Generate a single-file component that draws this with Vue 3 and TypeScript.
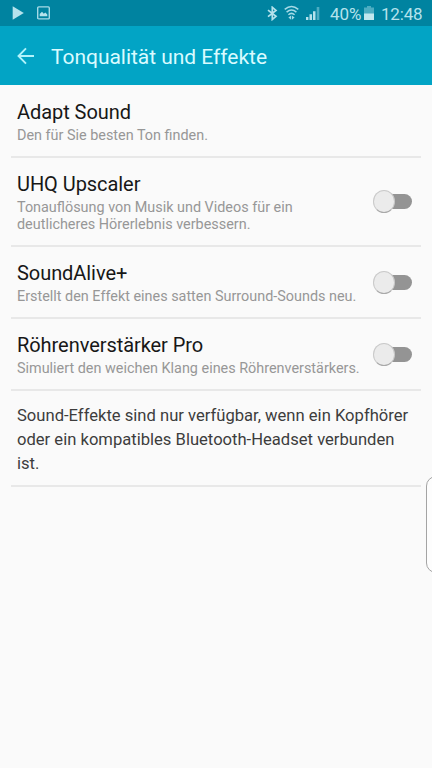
<script setup lang="ts">
interface Setting {
  title: string
  lines: string[]
  toggle: boolean
}

const settings: Setting[] = [
  { title: 'Adapt Sound', lines: ['Den für Sie besten Ton finden.'], toggle: false },
  {
    title: 'UHQ Upscaler',
    lines: ['Tonauflösung von Musik und Videos für ein', 'deutlicheres Hörerlebnis verbessern.'],
    toggle: true,
  },
  { title: 'SoundAlive+', lines: ['Erstellt den Effekt eines satten Surround-Sounds neu.'], toggle: true },
  { title: 'Röhrenverstärker Pro', lines: ['Simuliert den weichen Klang eines Röhrenverstärkers.'], toggle: true },
]

const note: string[] = [
  'Sound-Effekte sind nur verfügbar, wenn ein Kopfhörer',
  'oder ein kompatibles Bluetooth-Headset verbunden',
  'ist.',
]
</script>

<template>
  <div class="screen">
    <div class="status">
      <svg class="play" width="12" height="14" viewBox="0 0 12 14"><path d="M0.7 0.2 11.8 7 0.7 13.8z" fill="#b5e2ec" /></svg>
      <svg class="picture" width="13" height="14" viewBox="0 0 13 14">
        <rect x="0.7" y="0.9" width="11.6" height="12" rx="1" fill="none" stroke="#a5dae6" stroke-width="1.4" />
        <path d="M2.7 10.2V8L5 5.8l1.8 2 1.5-1.2 2 2v1.6z" fill="#b5e2ec" />
      </svg>
      <span class="gap"></span>
      <svg class="bluetooth" width="11" height="15" viewBox="0 0 11 15">
        <path d="M1 4.2 9 10.4 5.3 13.5V1.3L9 4.4 1 10.6" fill="none" stroke="#b5e2ec" stroke-width="1.7" />
      </svg>
      <svg class="wifi" width="15" height="16" viewBox="0 0 15 16">
        <g fill="none" stroke="#a5dae6" stroke-width="1.5">
          <path d="M.7 4.4Q7.5-1.5 14.3 4.4" />
          <path d="M2.6 7.1Q7.5 2.8 12.4 7.1" />
          <path d="M4.4 9.7Q7.5 7 10.6 9.7" />
        </g>
        <path d="M4.4 12.6 7.1 10.4v4.4zM10.6 12.6 7.9 10.4v4.4z" fill="#a5dae6" />
      </svg>
      <svg class="signal" width="14" height="14" viewBox="0 0 14 14">
        <path d="M0 11h2.4v3H0zM3.5 8.3h2.5V14H3.5zM7 5.2h2.5V14H7z" fill="#b5e2ec" />
        <path d="M10.7 1h2.6v13h-2.6z" fill="#4dadc2" />
      </svg>
      <span class="percent">40%</span>
      <svg class="battery" width="10" height="14" viewBox="0 0 10 14">
        <path d="M3 0h4v1.5H10V8H0V1.5h3z" fill="#4dadc2" />
        <path d="M0 7.5h10V14H0z" fill="#c1e7ee" />
      </svg>
      <span class="clock">12:48</span>
    </div>

    <header class="header">
      <svg class="back" width="18" height="18" viewBox="0 0 18 18">
        <path d="M17 9H1.8M9 1.3 1.5 9 9 16.7" fill="none" stroke="#b1f3fb" stroke-width="1.9" />
      </svg>
      <h1>Tonqualität und Effekte</h1>
    </header>

    <main>
      <section v-for="item in settings" :key="item.title" class="row">
        <div class="copy">
          <h2>{{ item.title }}</h2>
          <p v-for="line in item.lines" :key="line">{{ line }}</p>
        </div>
        <span v-if="item.toggle" class="switch"><i class="knob"></i></span>
      </section>
      <section class="note">
        <p v-for="line in note" :key="line">{{ line }}</p>
      </section>
    </main>

    <div class="edge"></div>
  </div>
</template>

<style>
body {
  background: #fafafa;
}
</style>

<style scoped>
.screen {
  position: relative;
  height: 768px;
  overflow: hidden;
  background: #fafafa;
  font-family: Roboto, sans-serif;
}
h1, h2, p {
  margin: 0;
  font-weight: 400;
  white-space: nowrap;
}
.status {
  display: flex;
  align-items: center;
  height: 26px;
  padding: 0 10px 0 12px;
  background: #0083a0;
  color: #b5e2ec;
  font-size: 17px;
  line-height: 26px;
}
svg {
  flex: none;
  display: block;
}
.picture { margin-left: 13px; }
.gap { flex: 1; }
.wifi { margin-left: 6px; }
.signal { margin-left: 7px; }
.percent {
  width: 31px;
  margin-left: 10px;
  padding-top: 2px;
}
.battery { margin-left: 3px; }
.clock {
  width: 41px;
  margin-left: 7px;
  padding-top: 2px;
  letter-spacing: -0.2px;
}
.header {
  display: flex;
  align-items: center;
  height: 59px;
  padding-left: 17px;
  background: #02a4c5;
}
h1 {
  margin-left: 16px;
  padding-top: 3px;
  color: #d9fbff;
  font-size: 21px;
  letter-spacing: -0.03px;
  line-height: 24px;
}
main {
  padding: 1px 11px 0;
}
.row {
  display: flex;
  align-items: center;
  justify-content: space-between;
  padding: 14px 9px 12px 6px;
  border-bottom: 2px solid #e8e8e8;
}
h2 {
  margin-bottom: 3px;
  color: #171717;
  font-size: 20px;
  letter-spacing: -0.06px;
  line-height: 24px;
}
.row p {
  color: #979797;
  font-size: 14.4px;
  line-height: 17px;
}
.switch {
  position: relative;
  flex: none;
  width: 29px;
  height: 15px;
  margin-top: -2px;
  border-radius: 8px;
  background: #949494;
}
.knob {
  position: absolute;
  left: -10px;
  top: -4px;
  box-sizing: border-box;
  width: 22px;
  height: 23px;
  border: 1px solid #c9c9c9;
  border-bottom-color: #a9a9a9;
  border-radius: 50%;
  background: #ebebeb;
}
.note {
  padding: 13px 6px 9px;
  border-bottom: 2px solid #e8e8e8;
  color: #3d3d3d;
  font-size: 16.6px;
  line-height: 24px;
}
.edge {
  position: absolute;
  left: 426px;
  top: 476px;
  box-sizing: border-box;
  width: 20px;
  height: 97px;
  border: 1px solid #a4a4a4;
  border-radius: 10px;
  background: #fdfdfd;
}
</style>
